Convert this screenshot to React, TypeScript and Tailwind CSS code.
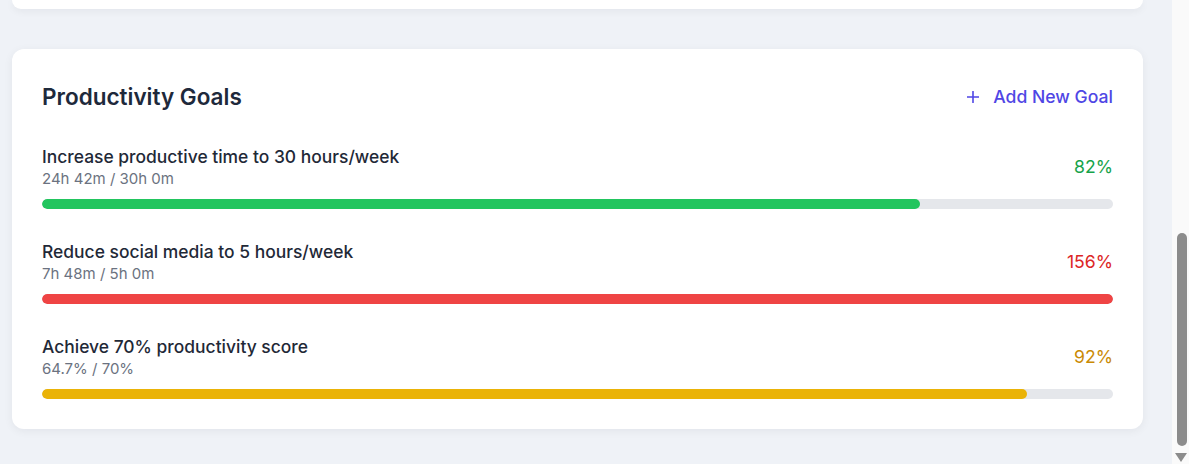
import { FunctionComponent } from 'react';

//  ---------------------------------------------------------------------------
//  TYPES
//  ---------------------------------------------------------------------------

interface Goal {
  title: string;
  detail: string;
  percent: number;
  bar: string;
  text: string;
}

//  ---------------------------------------------------------------------------
//  DATA
//  ---------------------------------------------------------------------------

const goals: Goal[] = [
  {
    title: 'Increase productive time to 30 hours/week',
    detail: '24h 42m / 30h 0m',
    percent: 82,
    bar: 'bg-[#22c55e]',
    text: 'text-[#16a34a]',
  },
  {
    title: 'Reduce social media to 5 hours/week',
    detail: '7h 48m / 5h 0m',
    percent: 156,
    bar: 'bg-[#ef4444]',
    text: 'text-[#dc2626]',
  },
  {
    title: 'Achieve 70% productivity score',
    detail: '64.7% / 70%',
    percent: 92,
    bar: 'bg-[#eab308]',
    text: 'text-[#ca8a04]',
  },
];

//  ---------------------------------------------------------------------------
//  UI
//  ---------------------------------------------------------------------------

const GoalRow: FunctionComponent<{ goal: Goal }> = ({ goal }) => {
  return (
    <div>
      <div className="flex items-center justify-between">
        <div>
          <div className="text-[17.45px] leading-6 font-medium text-[#1f2937]">{goal.title}</div>
          <div className="text-[15px] leading-5 text-[#6b7280]">{goal.detail}</div>
        </div>
        <div className={`text-[17.6px] leading-6 font-normal ${goal.text}`}>{goal.percent}%</div>
      </div>
      <div className="mt-[10px] h-[10px] w-full overflow-hidden rounded-full bg-[#e5e7eb]">
        <div
          className={`h-full rounded-full ${goal.bar}`}
          style={{ width: `${Math.min(goal.percent, 100)}%` }}
        />
      </div>
    </div>
  );
};

const Scrollbar: FunctionComponent = () => {
  return (
    <div className="flex w-[17px] shrink-0 flex-col justify-end bg-[#fafafa]">
      <div className="ml-[5px] h-[213px] w-[10px] rounded-full bg-[#8c8c8c]" />
      <div className="flex h-[18px] justify-center pt-[7px] pl-[1px]">
        <svg width="12" height="9" viewBox="0 0 12 9">
          <path d="M0 0h12L6 9z" fill="#8c8c8c" />
        </svg>
      </div>
    </div>
  );
};

const App: FunctionComponent = () => {
  return (
    <div
      className="flex h-[464px] w-full overflow-hidden bg-[#eff2f7]"
      style={{ fontFamily: 'Inter, "Noto Sans", sans-serif' }}
    >
      <div className="flex min-w-0 flex-1 flex-col pl-3 pr-[29px]">
        <div className="h-[9px] rounded-b-xl bg-white shadow-[0_2px_8px_rgba(15,23,42,0.06)]" />

        <div className="mt-10 rounded-xl bg-white px-[30px] pt-[34px] pb-[30px] shadow-[0_2px_10px_rgba(15,23,42,0.06)]">
          <div className="flex h-7 items-center justify-between">
            <h2 className="text-[22.5px] leading-7 font-semibold text-[#1e293b]">Productivity Goals</h2>
            <button className="flex items-center gap-[14px] text-[17.6px] font-medium text-[#4f46e5]">
              <svg width="12" height="12" viewBox="0 0 12 12">
                <path d="M6 0.5v11M0.5 6h11" stroke="#4f46e5" strokeWidth="1.6" strokeLinecap="round" />
              </svg>
              Add New Goal
            </button>
          </div>

          <div className="mt-[34px] flex flex-col gap-[31px]">
            {goals.map((goal) => (
              <GoalRow key={goal.title} goal={goal} />
            ))}
          </div>
        </div>
      </div>
      <Scrollbar />
    </div>
  );
};

export default App;
